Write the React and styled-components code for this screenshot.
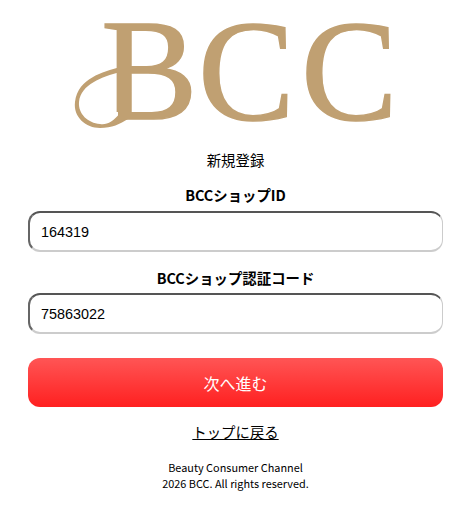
import React from "react";
import styled, { createGlobalStyle } from "styled-components";

const Global = createGlobalStyle`
  html, body { margin: 0; padding: 0; background: #fff; }
  body { font-family: "Noto Sans CJK JP", "Noto Sans", sans-serif; color: #000; }
`;

const Page = styled.main`
  width: 471px;
  height: 511px;
  box-sizing: border-box;
  padding: 0 28px;
  display: flex;
  flex-direction: column;
  overflow: hidden;
`;

const LogoWrap = styled.div`
  display: flex;
  justify-content: center;
  height: 130px;
  margin: 0 -28px;
`;

const Title = styled.h1`
  margin: 19px 0 0;
  font-size: 14.4px;
  font-weight: 400;
  line-height: 22px;
  text-align: center;
`;

const Field = styled.div`
  display: flex;
  flex-direction: column;
  margin-top: ${p => p.$top}px;
`;

const Label = styled.label`
  font-size: 14.4px;
  font-weight: 700;
  line-height: 20px;
  text-align: center;
  margin-bottom: ${p => p.$gap}px;
`;

const Input = styled.input`
  height: 41px;
  box-sizing: border-box;
  padding: 0 11px;
  border-style: solid;
  border-width: 2px 1.5px 2px 2px;
  border-color: #555 #ccc #ccc #666;
  border-radius: 12px;
  font-family: "Liberation Sans", Arial, sans-serif;
  font-size: 14.4px;
  color: #000;
  outline: none;
`;

const Submit = styled.button`
  height: 49px;
  margin-top: 24px;
  border: 0;
  border-radius: 12px;
  background: linear-gradient(#ff5555, #ff2020);
  color: #fff;
  font-family: inherit;
  font-size: 16px;
`;

const BackLink = styled.a`
  align-self: center;
  margin-top: 14px;
  font-size: 14.4px;
  line-height: 22px;
  color: #000;
  text-decoration: underline;
`;

const Footer = styled.footer`
  margin-top: 16px;
  font-size: 10.88px;
  line-height: 16px;
  text-align: center;
`;

const Logo = () => (
  <svg width="471" height="130" viewBox="0 0 471 130" role="img" aria-label="BCC" overflow="visible">
    <g fill="#c0a072" stroke="#c0a072" strokeWidth="1.4" fontFamily="'Liberation Serif', serif" fontSize="145">
      <text x="101" y="119">B</text>
      <text x="198" y="120">C</text>
      <text x="301" y="120">C</text>
    </g>
    <rect x="98" y="112" width="20" height="10" fill="#fff" />
    <path
      fill="#c0a072"
      d="M120 67 C103 72 78 78 75 102 C73 117 86 128 100 128 C112 128 120 124 128 119 L133 119 L133 113 L120 113 C113 122 107 125 100 124 C88 123 78 114 79 102 C81 84 102 77 120 72 Z"
    />
  </svg>
);

export default function App() {
  return (
    <>
      <Global />
      <Page>
        <LogoWrap>
          <Logo />
        </LogoWrap>
        <Title>新規登録</Title>
        <Field $top={14}>
          <Label $gap={6}>BCCショップID</Label>
          <Input defaultValue="164319" />
        </Field>
        <Field $top={16}>
          <Label $gap={5}>BCCショップ認証コード</Label>
          <Input defaultValue="75863022" />
        </Field>
        <Submit>次へ進む</Submit>
        <BackLink href="#">トップに戻る</BackLink>
        <Footer>
          Beauty Consumer Channel
          <br />
          2026 BCC. All rights reserved.
        </Footer>
      </Page>
    </>
  );
}
